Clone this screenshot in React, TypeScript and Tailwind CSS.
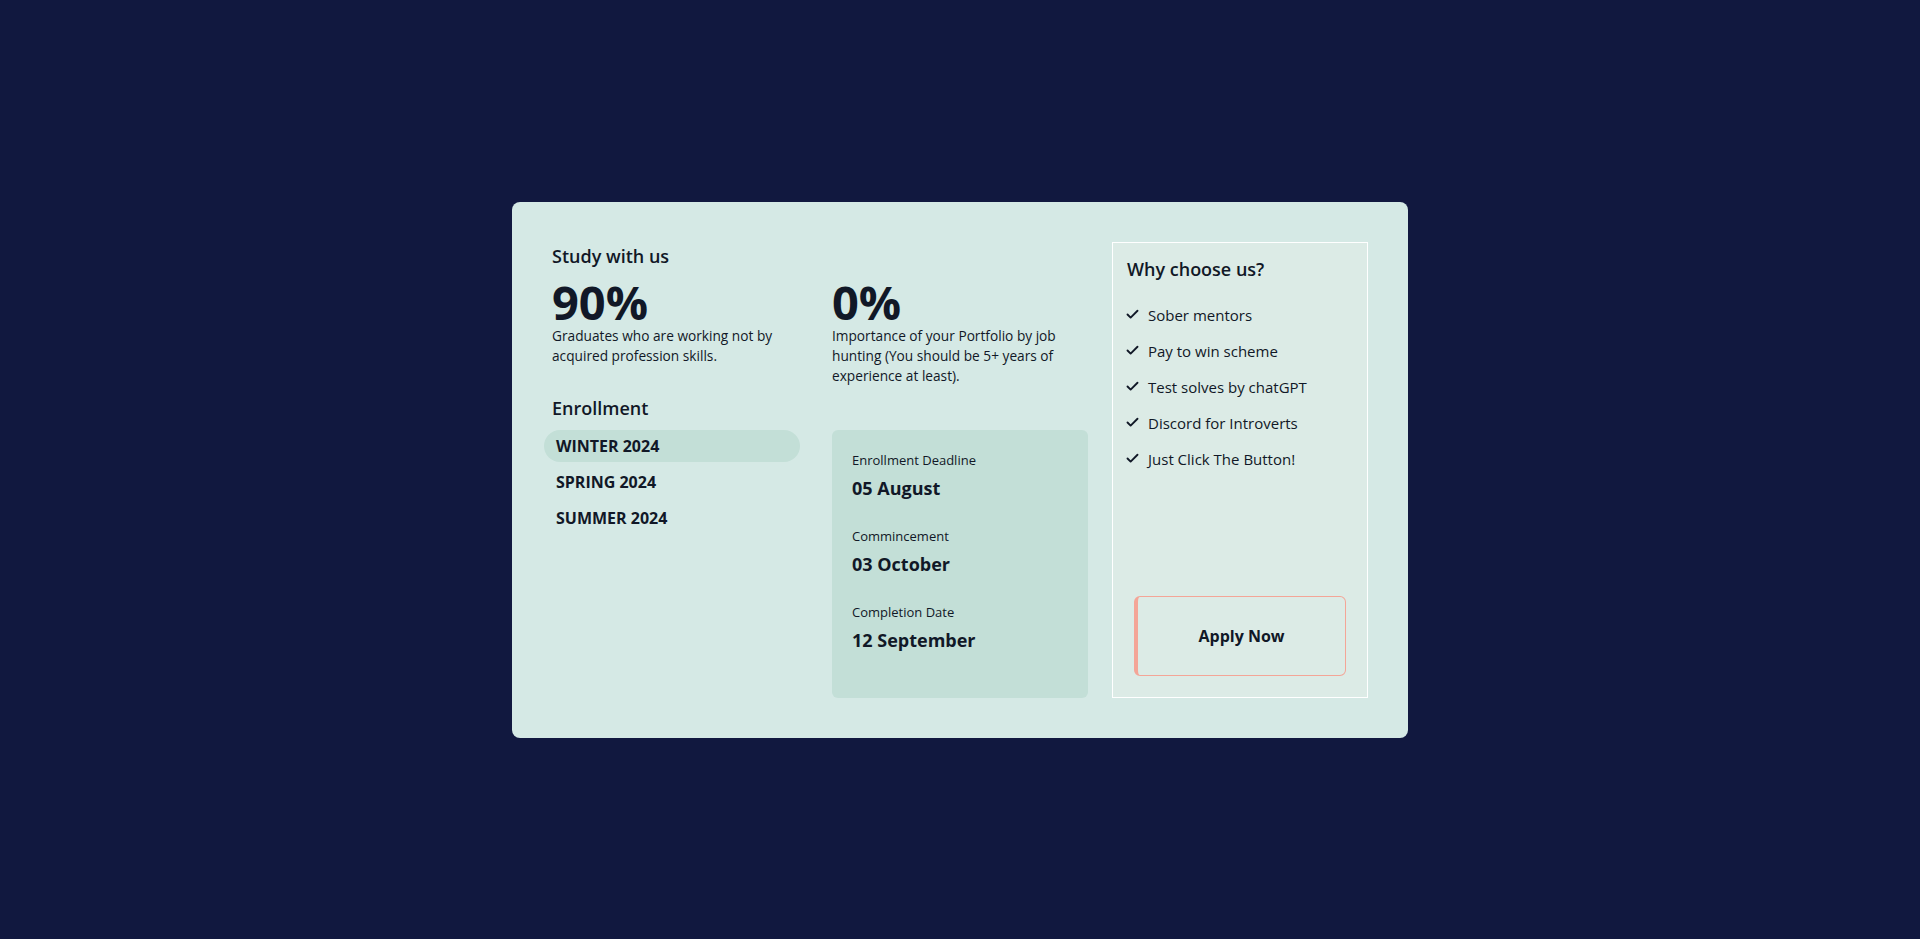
import React from "react";
import { Check } from "lucide-react";

const dates = [
  { label: "Enrollment Deadline", value: "05 August" },
  { label: "Commincement", value: "03 October" },
  { label: "Completion Date", value: "12 September" },
];

const reasons = [
  "Sober mentors",
  "Pay to win scheme",
  "Test solves by chatGPT",
  "Discord for Introverts",
  "Just Click The Button!",
];

const terms = ["WINTER 2024", "SPRING 2024", "SUMMER 2024"];

const App = () => {
  const [active, setActive] = React.useState(0);
  return (
    <div
      className="h-screen w-full flex items-center justify-center bg-[#11183f] text-[#111827]"
      style={{ fontFamily: '"Open Sans", "Noto Sans", sans-serif' }}
    >
      <div className="w-[896px] h-[536px] rounded-lg bg-[#d5e9e5] p-10 flex gap-6">
        <div className="flex-1 flex flex-col">
          <h2 className="text-lg leading-7 font-semibold">Study with us</h2>
          <div className="grid grid-cols-2 gap-x-6 mt-2">
            <div>
              <p className="text-[47px] leading-[48px] font-bold">90%</p>
              <p className="text-[13.7px] leading-5 font-medium">
                Graduates who are working not by acquired profession skills.
              </p>
            </div>
            <div>
              <p className="text-[47px] leading-[48px] font-bold">0%</p>
              <p className="text-[13.7px] leading-5 font-medium">
                Importance of your Portfolio by job hunting (You should be 5+
                years of experience at least).
              </p>
            </div>
          </div>
          <div className="grid grid-cols-2 gap-x-6 mt-2 flex-1">
            <div>
              <h3 className="text-lg leading-7 font-semibold">Enrollment</h3>
              <ul className="mt-2 space-y-1">
                {terms.map((t, i) => (
                  <li key={t}>
                    <button
                      onClick={() => setActive(i)}
                      className={
                        "-ml-2 w-64 h-8 px-3 rounded-full text-left text-base font-bold " +
                        (active === i ? "bg-[#c3dfd7]" : "")
                      }
                    >
                      {t}
                    </button>
                  </li>
                ))}
              </ul>
            </div>
            <div className="mt-9 rounded-md bg-[#c3dfd7] p-5 space-y-6">
              {dates.map((d) => (
                <div key={d.label}>
                  <p className="text-[13px] leading-5">{d.label}</p>
                  <p className="mt-1 text-lg leading-7 font-bold">{d.value}</p>
                </div>
              ))}
            </div>
          </div>
        </div>
        <div className="w-64 border border-white bg-[#dcebe6] px-3.5 pt-3 pb-3.5 flex flex-col">
          <h3 className="text-lg leading-7 font-semibold">Why choose us?</h3>
          <ul className="mt-5 space-y-3">
            {reasons.map((r) => (
              <li key={r} className="flex items-center gap-2 text-[15px] leading-6">
                <Check size={15} strokeWidth={3} className="-ml-0.5" />
                <span>{r}</span>
              </li>
            ))}
          </ul>
          <button className="mt-auto mx-[7px] mb-[7px] h-20 rounded-md border border-[#f4a597] border-l-4 font-bold">
            Apply Now
          </button>
        </div>
      </div>
    </div>
  );
};

export default App;
